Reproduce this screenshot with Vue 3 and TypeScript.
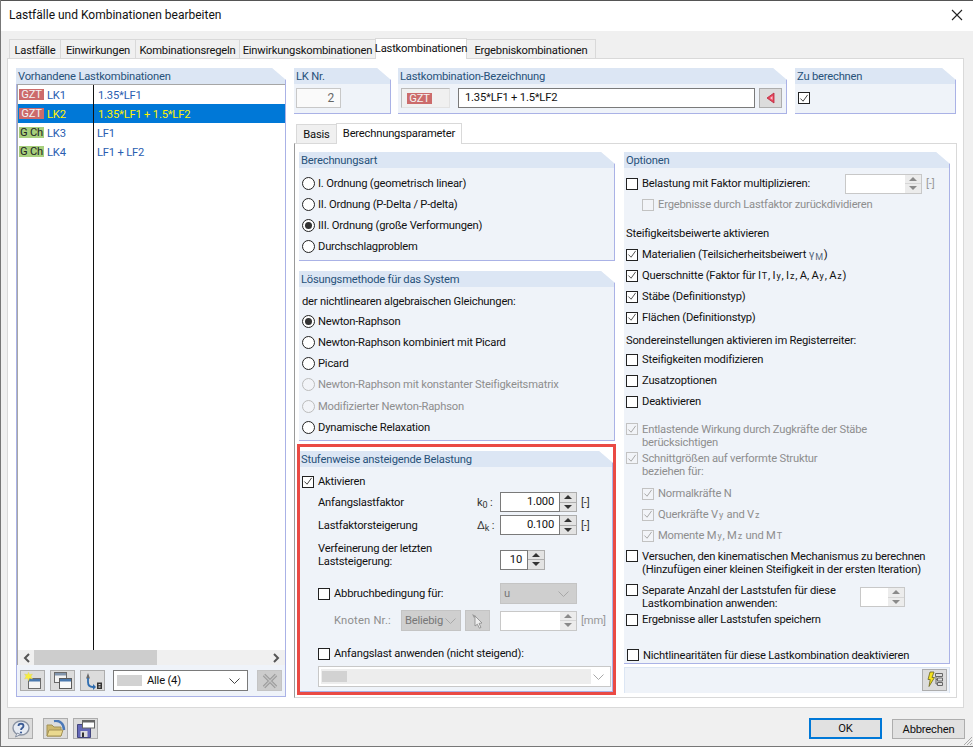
<script setup lang="ts">
import { ref } from 'vue'

interface Combo {
  badge: string
  kind: 'gzt' | 'gch'
  no: string
  formula: string
}

interface Choice {
  text: string
  on?: boolean
  off?: boolean
}

const mainTabs = ['Lastfälle', 'Einwirkungen', 'Kombinationsregeln', 'Einwirkungskombinationen', 'Lastkombinationen', 'Ergebniskombinationen']

const combos = ref<Combo[]>([
  { badge: 'GZT', kind: 'gzt', no: 'LK1', formula: '1.35*LF1' },
  { badge: 'GZT', kind: 'gzt', no: 'LK2', formula: '1.35*LF1 + 1.5*LF2' },
  { badge: 'G Ch', kind: 'gch', no: 'LK3', formula: 'LF1' },
  { badge: 'G Ch', kind: 'gch', no: 'LK4', formula: 'LF1 + LF2' },
])

const selected = ref(1)

const orders: Choice[] = [
  { text: 'I. Ordnung (geometrisch linear)' },
  { text: 'II. Ordnung (P-Delta / P-delta)' },
  { text: 'III. Ordnung (große Verformungen)', on: true },
  { text: 'Durchschlagproblem' },
]

const methods: Choice[] = [
  { text: 'Newton-Raphson', on: true },
  { text: 'Newton-Raphson kombiniert mit Picard' },
  { text: 'Picard' },
  { text: 'Newton-Raphson mit konstanter Steifigkeitsmatrix', off: true },
  { text: 'Modifizierter Newton-Raphson', off: true },
  { text: 'Dynamische Relaxation' },
]

const special = ['Steifigkeiten modifizieren', 'Zusatzoptionen', 'Deaktivieren']
</script>

<template>
  <div class="dialog">
    <header class="titlebar">
      <span class="title">Lastfälle und Kombinationen bearbeiten</span>
      <svg class="close" width="12" height="12" viewBox="0 0 12 12"><path d="M1 1l10 10M11 1L1 11" stroke="#222" stroke-width="1.1" fill="none" /></svg>
    </header>

    <nav class="main-tabs">
      <span v-for="(t, i) in mainTabs" :key="t" class="tab" :class="['mt' + i, { active: i === 4 }]">{{ t }}</span>
    </nav>

    <div class="outer">
      <section class="panel list-panel">
        <h3 class="head">Vorhandene Lastkombinationen</h3>
        <div class="list">
          <div class="sep"></div>
          <div v-for="(c, i) in combos" :key="c.no" class="row" :class="{ sel: i === selected }">
            <span class="badge" :class="c.kind">{{ c.badge }}</span>
            <span class="no">{{ c.no }}</span>
            <span class="formula" :class="{ tight: c.kind === 'gch' }">{{ c.formula }}</span>
          </div>
        </div>
        <div class="hscroll">
          <svg width="8" height="10" viewBox="0 0 8 10"><path d="M6 1L2 5l4 4" stroke="#555" stroke-width="2" fill="none" /></svg>
          <div class="thumb"></div>
          <svg class="right-arrow" width="8" height="10" viewBox="0 0 8 10"><path d="M2 1l4 4-4 4" stroke="#555" stroke-width="2" fill="none" /></svg>
        </div>
        <div class="list-foot">
          <button class="ico">
            <svg width="18" height="18" viewBox="0 0 18 18">
              <rect x="4.500" y="6.500" width="12" height="10" fill="#f3f3f3" stroke="#6a6a6a" />
              <rect x="5" y="7" width="11" height="2.500" fill="#4a78ad" />
              <path d="M4.500 0l1 2.600L8.500 2 7 4.300 8.500 7 5.500 6.300 4.500 9 3.500 6.300.500 7 2 4.300.500 2l3 .6z" fill="#f8ee3c" stroke="#d8cf70" stroke-width=".4" />
            </svg>
          </button>
          <button class="ico">
            <svg width="18" height="18" viewBox="0 0 18 18">
              <rect x=".5" y=".5" width="12" height="10" fill="#f3f3f3" stroke="#6a6a6a" />
              <rect x="1" y="1" width="11" height="2.500" fill="#8195ad" />
              <rect x="5.500" y="6.500" width="12" height="10" fill="#f8f8f8" stroke="#5a5a5a" />
              <rect x="6" y="7" width="11" height="2.500" fill="#4a78ad" />
            </svg>
          </button>
          <button class="ico">
            <svg width="20" height="18" viewBox="0 0 20 18">
              <path d="M5 1l2 5.500H3z" fill="#6a6a6a" />
              <path d="M5 6v4c0 3 2 5 5 5h1" stroke="#2f6db0" stroke-width="1.800" fill="none" />
              <path d="M10 12l3 3-3 3z" fill="#2f6db0" />
              <rect x="14" y="10.500" width="5" height="6.500" fill="#333" />
              <rect x="15.500" y="12" width="2" height="1.200" fill="#ddd" />
              <rect x="15.500" y="14.400" width="2" height="1.200" fill="#ddd" />
            </svg>
          </button>
          <div class="select filter">
            <span class="swatch"></span>
            <span class="sel-text">Alle (4)</span>
            <svg class="chev" width="11" height="6" viewBox="0 0 11 6"><path d="M.5.5l5 5 5-5" stroke="#444" fill="none" /></svg>
          </div>
          <button class="ico ico-off">
            <svg width="18" height="18" viewBox="0 0 18 18"><path d="M3 3l12 12M15 3L3 15" stroke="#9c9c9c" stroke-width="3.400" fill="none" /><path d="M3 3l12 12M15 3L3 15" stroke="#c4c4c4" stroke-width="1.200" fill="none" /></svg>
          </button>
        </div>
      </section>

      <div class="right">
        <div class="top-row">
          <section class="panel nr-panel">
            <h3 class="head">LK Nr.</h3>
            <div class="nr-body"><span class="nr-box">2</span></div>
          </section>
          <section class="panel name-panel">
            <h3 class="head">Lastkombination-Bezeichnung</h3>
            <div class="name-body">
              <span class="gzt-box"><span class="badge gzt">GZT</span></span>
              <span class="name-input">1.35*LF1 + 1.5*LF2</span>
              <button class="tri-btn">
                <svg width="9" height="12" viewBox="0 0 9 12"><path d="M8 1v10L1 6z" fill="#e8475d" stroke="#b8263b" stroke-width=".8" /><path d="M6.500 4v4L4 6z" fill="#f9c2cb" /></svg>
              </button>
            </div>
          </section>
          <section class="panel calc-panel">
            <h3 class="head">Zu berechnen</h3>
            <div class="calc-body">
              <span class="cb"><svg width="11" height="11" viewBox="0 0 11 11"><path d="M1.500 5.500l3 3 5-7" stroke="#444" stroke-width="1.100" fill="none" /></svg></span>
            </div>
          </section>
        </div>

        <nav class="sub-tabs">
          <span class="tab basis">Basis</span>
          <span class="tab active params">Berechnungsparameter</span>
        </nav>

        <div class="inner">
          <div class="col-left">
            <section class="panel p-order">
              <h3 class="head">Berechnungsart</h3>
              <div class="pad">
                <label v-for="o in orders" :key="o.text" class="line">
                  <span class="radio" :class="{ on: o.on }"></span>{{ o.text }}
                </label>
              </div>
            </section>

            <section class="panel p-method">
              <h3 class="head">Lösungsmethode für das System</h3>
              <div class="pad">
                <div class="line plain intro">der nichtlinearen algebraischen Gleichungen:</div>
                <label v-for="m in methods" :key="m.text" class="line" :class="{ dim: m.off }">
                  <span class="radio" :class="{ on: m.on, off: m.off }"></span>{{ m.text }}
                </label>
              </div>
            </section>

            <div class="steps-wrap">
              <section class="panel p-steps">
                <h3 class="head">Stufenweise ansteigende Belastung</h3>
                <div class="pad">
                  <label class="line">
                    <span class="cb"><svg width="11" height="11" viewBox="0 0 11 11"><path d="M1.500 5.500l3 3 5-7" stroke="#444" stroke-width="1.100" fill="none" /></svg></span>Aktivieren
                  </label>
                  <div class="field f1">
                    <span class="f-label">Anfangslastfaktor</span>
                    <span class="f-sym">k<sub>0</sub> :</span>
                    <span class="spin"><span class="val">1.000</span><span class="arrows"><i class="up"></i><i class="down"></i></span></span>
                    <span class="unit">[-]</span>
                  </div>
                  <div class="field f2">
                    <span class="f-label">Lastfaktorsteigerung</span>
                    <span class="f-sym">Δ<sub>k</sub> :</span>
                    <span class="spin"><span class="val">0.100</span><span class="arrows"><i class="up"></i><i class="down"></i></span></span>
                    <span class="unit">[-]</span>
                  </div>
                  <div class="field f3">
                    <span class="f-label two">Verfeinerung der letzten<br />Laststeigerung:</span>
                    <span class="spin small"><span class="val">10</span><span class="arrows"><i class="up"></i><i class="down"></i></span></span>
                  </div>
                  <div class="field f4">
                    <label class="line sub"><span class="cb"></span>Abbruchbedingung für:</label>
                    <div class="select gray-sel u-sel"><span class="sel-text">u</span><svg class="chev" width="11" height="6" viewBox="0 0 11 6"><path d="M.5.5l5 5 5-5" stroke="#a8a8a8" fill="none" /></svg></div>
                  </div>
                  <div class="field f5">
                    <span class="knoten">Knoten Nr.:</span>
                    <div class="select gray-sel any-sel"><span class="sel-text">Beliebig</span><svg class="chev" width="11" height="6" viewBox="0 0 11 6"><path d="M.5.5l5 5 5-5" stroke="#a8a8a8" fill="none" /></svg></div>
                    <button class="pick">
                      <svg width="14" height="16" viewBox="0 0 14 16"><path d="M4 3l7 7-3 .4 2 4-1.600.8-2-4L4 13z" fill="#eee" stroke="#888" stroke-width=".8" /><path d="M1 1l4 2-2 2z" fill="#999" /></svg>
                    </button>
                    <span class="spin empty"><span class="val"></span><span class="arrows"><i class="up"></i><i class="down"></i></span></span>
                    <span class="unit dim">[mm]</span>
                  </div>
                  <label class="line sub f6"><span class="cb"></span>Anfangslast anwenden (nicht steigend):</label>
                  <div class="wide-sel">
                    <div class="wide-fill"><span class="swatch"></span></div>
                    <svg class="chev" width="11" height="6" viewBox="0 0 11 6"><path d="M.5.5l5 5 5-5" stroke="#a8a8a8" fill="none" /></svg>
                  </div>
                </div>
              </section>
              <div class="red-frame"></div>
            </div>
          </div>

          <div class="col-right">
            <section class="panel p-options">
              <h3 class="head">Optionen</h3>
              <div class="opt-body">
                <div class="line o-first">
                  <span class="cb"></span><span class="o-first-text">Belastung mit Faktor multiplizieren:</span>
                  <span class="spin empty factor"><span class="val"></span><span class="arrows"><i class="up"></i><i class="down"></i></span></span>
                  <span class="unit dim">[-]</span>
                </div>
                <label class="line dim ind"><span class="cb off"></span>Ergebnisse durch Lastfaktor zurückdividieren</label>
                <div class="line plain o-gap">Steifigkeitsbeiwerte aktivieren</div>
                <label class="line"><span class="cb"><svg width="11" height="11" viewBox="0 0 11 11"><path d="M1.500 5.500l3 3 5-7" stroke="#555" stroke-width="1.100" fill="none" /></svg></span>Materialien (Teilsicherheitsbeiwert&nbsp;<span class="greek">γ<sub>M</sub></span>)</label>
                <label class="line"><span class="cb"><svg width="11" height="11" viewBox="0 0 11 11"><path d="M1.500 5.500l3 3 5-7" stroke="#555" stroke-width="1.100" fill="none" /></svg></span>Querschnitte (Faktor für I<sub>T</sub>, I<sub>y</sub>, I<sub>z</sub>, A, A<sub>y</sub>, A<sub>z</sub>)</label>
                <label class="line"><span class="cb"><svg width="11" height="11" viewBox="0 0 11 11"><path d="M1.500 5.500l3 3 5-7" stroke="#555" stroke-width="1.100" fill="none" /></svg></span>Stäbe (Definitionstyp)</label>
                <label class="line"><span class="cb"><svg width="11" height="11" viewBox="0 0 11 11"><path d="M1.500 5.500l3 3 5-7" stroke="#555" stroke-width="1.100" fill="none" /></svg></span>Flächen (Definitionstyp)</label>
                <div class="line plain o-sonder">Sondereinstellungen aktivieren im Registerreiter:</div>
                <label v-for="s in special" :key="s" class="line"><span class="cb"></span>{{ s }}</label>
                <label class="multi dim o-ent"><span class="cb off"><svg width="11" height="11" viewBox="0 0 11 11"><path d="M1.500 5.500l3 3 5-7" stroke="#aaa" stroke-width="1.100" fill="none" /></svg></span><span>Entlastende Wirkung durch Zugkräfte der Stäbe<br />berücksichtigen</span></label>
                <label class="multi dim o-sch"><span class="cb off"><svg width="11" height="11" viewBox="0 0 11 11"><path d="M1.500 5.500l3 3 5-7" stroke="#aaa" stroke-width="1.100" fill="none" /></svg></span><span>Schnittgrößen auf verformte Struktur<br />beziehen für:</span></label>
                <label class="line dim ind o-nk"><span class="cb off"><svg width="11" height="11" viewBox="0 0 11 11"><path d="M1.500 5.500l3 3 5-7" stroke="#aaa" stroke-width="1.100" fill="none" /></svg></span>Normalkräfte N</label>
                <label class="line dim ind"><span class="cb off"><svg width="11" height="11" viewBox="0 0 11 11"><path d="M1.500 5.500l3 3 5-7" stroke="#aaa" stroke-width="1.100" fill="none" /></svg></span>Querkräfte V<sub>y</sub>&nbsp;and V<sub>z</sub></label>
                <label class="line dim ind"><span class="cb off"><svg width="11" height="11" viewBox="0 0 11 11"><path d="M1.500 5.500l3 3 5-7" stroke="#aaa" stroke-width="1.100" fill="none" /></svg></span>Momente M<sub>y</sub>, M<sub>z</sub>&nbsp;und M<sub>T</sub></label>
                <label class="multi o-ver"><span class="cb"></span><span>Versuchen, den kinematischen Mechanismus zu berechnen<br />(Hinzufügen einer kleinen Steifigkeit in der ersten Iteration)</span></label>
                <div class="multi o-sep">
                  <span class="cb"></span><span class="sep-text">Separate Anzahl der Laststufen für diese<br />Lastkombination anwenden:</span>
                  <span class="spin empty count"><span class="val"></span><span class="arrows"><i class="up"></i><i class="down"></i></span></span>
                </div>
                <label class="line"><span class="cb"></span>Ergebnisse aller Laststufen speichern</label>
                <label class="line o-nicht"><span class="cb"></span>Nichtlinearitäten für diese Lastkombination deaktivieren</label>
              </div>
            </section>
            <div class="opt-foot">
              <button class="ico bolt">
                <svg width="20" height="18" viewBox="0 0 20 18">
                  <path d="M5 1h4L7 6.500h2.500L4 15.500l1.200-7H3z" fill="#f4e21c" stroke="#6b6420" stroke-width=".8" />
                  <path d="M10.500 2.500h7v3h-7zM12.500 7h5v3h-5zM12.500 11.500h5v3h-5zM11 5.500v7.500h1.500M11 8.500h1.500" fill="none" stroke="#666" stroke-width="1" />
                </svg>
              </button>
            </div>
          </div>
        </div>
      </div>
    </div>

    <footer class="bottom">
      <button class="ico dlg">
        <svg width="20" height="18" viewBox="0 0 20 18">
          <ellipse cx="10" cy="8" rx="8" ry="7" fill="#e6ebf3" stroke="#8a93a3" stroke-width="1.400" />
          <path d="M6 13l-1.500 4 5-2.500z" fill="#e6ebf3" stroke="#8a93a3" />
          <path d="M7.500 6c0-3 5-3 5 0 0 2-2.500 2-2.500 4" stroke="#3b5c96" stroke-width="1.800" fill="none" />
          <circle cx="10" cy="12.500" r="1.100" fill="#3b5c96" />
        </svg>
      </button>
      <button class="ico dlg open">
        <svg width="20" height="18" viewBox="0 0 20 18">
          <path d="M8 1c6-1 10 3 10 9" stroke="#4a78b8" stroke-width="2.400" fill="none" />
          <path d="M1 5h5l2 2h7v9H1z" fill="#cdb86e" stroke="#a39256" />
          <path d="M1 16l2-6h14l-2 6z" fill="#ead98f" stroke="#a39256" />
        </svg>
      </button>
      <button class="ico dlg">
        <svg width="20" height="18" viewBox="0 0 20 18">
          <path d="M1.500 4.500h13v13h-13z" fill="#6468b8" stroke="#43467e" />
          <rect x="4.500" y="11" width="7" height="6" fill="#ddd" />
          <rect x="6" y="12.500" width="2" height="4.500" fill="#333" />
          <rect x="6.500" y=".5" width="12" height="7.500" fill="#fff" stroke="#666" />
          <rect x="6.500" y=".5" width="12" height="2" fill="#666" />
        </svg>
      </button>
      <div class="spacer"></div>
      <button class="btn ok">OK</button>
      <button class="btn">Abbrechen</button>
      <svg class="grip" width="11" height="11" viewBox="0 0 11 11"><path d="M10 2L2 10M10 5L5 10M10 8L8 10" stroke="#aaa" fill="none" /></svg>
    </footer>
  </div>
</template>

<style scoped>
.dialog {
  width: 973px;
  height: 747px;
  box-sizing: border-box;
  border-left: 1px solid #777;
  border-bottom: 1px solid #777;
  background: #f0f0f0;
  font-family: Roboto, "Liberation Sans", sans-serif;
  font-size: 11.2px;
  letter-spacing: -0.2px;
  color: #111;
  overflow: hidden;
  display: flex;
  flex-direction: column;
}

.titlebar {
  height: 31px;
  flex: none;
  background: #fff;
  display: flex;
  align-items: center;
  padding: 0 10px 2px 8px;
  border-top: 1px solid #555;
  box-sizing: border-box;
}

.title {
  font-size: 12px;
  letter-spacing: 0;
  color: #111;
  flex: 1;
}

.main-tabs {
  height: 21px;
  margin-top: 6px;
  padding-left: 8px;
  display: flex;
  align-items: flex-end;
  flex: none;
}

.tab {
  display: flex;
  align-items: center;
  justify-content: center;
  height: 19px;
  box-sizing: border-box;
  background: #f0f0f0;
  border: 1px solid #d9d9d9;
  border-bottom: none;
  margin-right: -1px;
  padding-top: 2px;
}

.tab.active {
  height: 21px;
  background: #fff;
  position: relative;
  z-index: 1;
  margin-bottom: -1px;
  padding: 0 0 2px;
}

.mt0 { width: 52px; }
.mt1 { width: 76px; }
.mt2 { width: 105px; }
.mt3 { width: 137px; }
.mt4 { width: 92px; }
.mt5 { width: 130px; }

.outer {
  height: 650px;
  flex: none;
  margin: 0 9px 0 6px;
  background: #fff;
  border: 1px solid #d9d9d9;
  box-sizing: border-box;
  padding: 9px 6px 0 8px;
  display: flex;
  gap: 8px;
}

.panel {
  background: #eff3f9;
  border-right: 1px solid #aab2e6;
  border-bottom: 1px solid #aab2e6;
  box-sizing: border-box;
  clip-path: polygon(0 0, calc(100% - 14px) 0, 100% 12px, 100% 100%, 0 100%);
}

.head {
  margin: 0;
  height: 16px;
  line-height: 18px;
  background: #dce6f4;
  font-size: 11.2px;
  font-weight: 400;
  color: #28527a;
  padding-left: 2px;
  white-space: nowrap;
  overflow: hidden;
}

.list-panel {
  width: 270px;
  height: 629px;
  display: flex;
  flex-direction: column;
  border-left: 1px solid #aab2e6;
}

.list-panel .head {
  margin-left: -1px;
  flex: none;
}

.list {
  height: 566px;
  flex: none;
  background: #fff;
  border-top: 1px solid #a6a6a6;
  border-left: 1px solid #a6a6a6;
  box-sizing: border-box;
  position: relative;
}

.sep {
  position: absolute;
  left: 75px;
  top: 0;
  bottom: 0;
  width: 1px;
  background: #111;
  z-index: 2;
}

.row {
  height: 19px;
  display: flex;
  align-items: center;
  color: #2a5db0;
  white-space: nowrap;
}

.row.sel {
  background: #0078d7;
  color: #fff200;
}

.badge {
  height: 11px;
  width: 25px;
  flex: none;
  margin-left: 1px;
  display: flex;
  align-items: center;
  justify-content: center;
  color: #f4f4f4;
}

.badge.gzt {
  background: #cc6b6b;
}

.badge.gch {
  background: #a7cf7c;
  color: #222;
}

.no {
  width: 49px;
  flex: none;
  padding: 2px 0 0 3px;
  box-sizing: border-box;
}

.formula {
  margin-left: 5px;
  padding-top: 2px;
}

.formula.tight {
  margin-left: 4px;
}

.hscroll {
  height: 15px;
  flex: none;
  background: #f0f0f0;
  display: flex;
  align-items: center;
  padding-left: 5px;
  border-left: 1px solid #a6a6a6;
  box-sizing: border-box;
}

.thumb {
  width: 123px;
  height: 15px;
  background: #cdcdcd;
  margin-left: 3px;
}

.right-arrow {
  margin-left: auto;
  margin-right: 5px;
}

.list-foot {
  flex: 1;
  display: flex;
  align-items: center;
  padding-left: 3px;
  background: #eff3f9;
}

.ico {
  width: 25px;
  height: 21px;
  box-sizing: border-box;
  background: #dcdcdc;
  border: 1px solid #adadad;
  padding: 0;
  margin: 0 5px 0 0;
  display: flex;
  align-items: center;
  justify-content: center;
  flex: none;
}

.ico-off {
  background: #ccc;
  border-color: #c4c4c4;
  margin: 0 0 0 9px;
}

.select {
  display: flex;
  align-items: center;
  box-sizing: border-box;
  background: #fff;
  border: 1px solid #7a7a7a;
}

.filter {
  width: 135px;
  height: 21px;
  margin-left: 3px;
  padding-left: 3px;
}

.swatch {
  width: 25px;
  height: 11px;
  background: #d2d2d2;
  flex: none;
}

.filter .sel-text {
  margin-left: 5px;
}

.chev {
  margin-left: auto;
  margin-right: 7px;
  flex: none;
}

.right {
  width: 663px;
  display: flex;
  flex-direction: column;
}

.top-row {
  display: flex;
  height: 46px;
  flex: none;
}

.nr-panel {
  width: 97px;
  margin-right: 7px;
}

.nr-body {
  padding: 4px 0 0 2px;
}

.nr-box {
  display: block;
  width: 45px;
  height: 20px;
  line-height: 19px;
  box-sizing: border-box;
  background: #fafafa;
  border: 1px solid #c8c8c8;
  text-align: right;
  padding-right: 6px;
  color: #666;
  font-size: 12px;
}

.name-panel {
  width: 389px;
  margin-right: 8px;
}

.name-body {
  display: flex;
  align-items: center;
  padding: 4px 4px 0 3px;
}

.gzt-box {
  width: 49px;
  height: 20px;
  box-sizing: border-box;
  border: 1px solid #e2e2e2;
  border-top-color: #bbb;
  border-left-color: #bbb;
  background: #f0f0f0;
  display: flex;
  align-items: center;
  padding-left: 5px;
  flex: none;
}

.gzt-box .badge {
  margin: 0;
}

.name-input {
  width: 297px;
  height: 20px;
  line-height: 18px;
  margin-left: 8px;
  box-sizing: border-box;
  background: #fff;
  border: 1px solid #7a7a7a;
  padding-left: 6px;
  color: #111;
  flex: none;
}

.tri-btn {
  width: 25px;
  height: 20px;
  margin-left: 4px;
  box-sizing: border-box;
  background: #dcdcdc;
  border: 1px solid #adadad;
  padding: 0;
  display: flex;
  align-items: center;
  justify-content: center;
}

.calc-panel {
  width: 161px;
}

.calc-body {
  padding: 8px 0 0 3px;
}

.sub-tabs {
  height: 21px;
  margin-top: 8px;
  padding-left: 2px;
  display: flex;
  align-items: flex-end;
  flex: none;
}

.basis {
  width: 41px;
  padding-top: 0;
}

.params {
  width: 126px;
}

.inner {
  height: 555px;
  flex: none;
  border: 1px solid #d9d9d9;
  border-left-color: #9a9a9a;
  box-sizing: border-box;
  padding: 8px 6px 0 4px;
  display: flex;
  gap: 9px;
}

.col-left {
  width: 316px;
  flex: none;
  display: flex;
  flex-direction: column;
  gap: 10px;
}

.p-order {
  height: 109px;
}

.p-order .pad {
  padding-top: 5px;
}

.p-method {
  height: 170px;
}

.p-method .dim + .dim {
  margin-top: 1px;
}

.steps-wrap {
  position: relative;
  height: 241px;
}

.p-steps {
  height: 241px;
  width: 314px;
}

.red-frame {
  position: absolute;
  left: -2px;
  top: -7px;
  width: 319px;
  height: 251px;
  box-sizing: border-box;
  border: 3px solid #ea4a44;
  pointer-events: none;
}

.pad {
  padding: 4px 0 0 3px;
}

.line {
  height: 21px;
  display: flex;
  align-items: center;
  white-space: nowrap;
}

.line.intro {
  height: 20px;
  padding-top: 1px;
  box-sizing: border-box;
}

.dim {
  color: #8e8e8e;
}

.radio {
  width: 13px;
  height: 13px;
  box-sizing: border-box;
  border: 1px solid #222;
  border-radius: 50%;
  background: #fff;
  margin-right: 3px;
  flex: none;
  display: flex;
  align-items: center;
  justify-content: center;
}

.radio.on::after {
  content: "";
  width: 7px;
  height: 7px;
  border-radius: 50%;
  background: #333;
}

.radio.off {
  border-color: #bcbcbc;
  background: #f2f4f8;
}

.cb {
  width: 12px;
  height: 12px;
  box-sizing: border-box;
  border: 1px solid #222;
  background: #fff;
  margin-right: 4px;
  flex: none;
  display: flex;
  align-items: center;
  justify-content: center;
}

.cb.off {
  border-color: #c2c2c2;
  background: #f2f4f8;
}

sub {
  font-size: 9px;
  line-height: 0;
  vertical-align: -2px;
}

.line sub {
  margin: 0 1px;
}

.greek {
  color: #5a6a80;
}

.field {
  display: flex;
  align-items: center;
  white-space: nowrap;
}

.f1 {
  height: 20px;
  padding-left: 16px;
}

.f2 {
  height: 20px;
  margin-top: 3px;
  padding-left: 16px;
}

.f3 {
  height: 26px;
  margin-top: 7px;
  padding-left: 16px;
}

.f3 .spin {
  margin-top: 9px;
}

.f4 {
  height: 21px;
  margin-top: 15px;
  padding-left: 16px;
}

.f5 {
  height: 21px;
  margin-top: 6px;
  padding-left: 32px;
}

.f-label {
  width: 159px;
  flex: none;
}

.f-label.two {
  width: 182px;
  line-height: 13px;
}

.f-sym {
  width: 23px;
  flex: none;
  color: #333;
}

.spin {
  width: 77px;
  height: 20px;
  flex: none;
  box-sizing: border-box;
  display: flex;
}

.spin .val {
  flex: 1;
  text-align: right;
  line-height: 18px;
  padding-right: 5px;
  background: #fff;
  border: 1px solid #7a7a7a;
}

.arrows {
  width: 17px;
  flex: none;
  display: flex;
  flex-direction: column;
  box-sizing: border-box;
  background: #e3e3e3;
  border: 1px solid #adadad;
  border-left: none;
}

.arrows i {
  flex: 1;
  display: flex;
  align-items: center;
  justify-content: center;
}

.arrows i + i {
  border-top: 1px solid #adadad;
}

.arrows i::after {
  content: "";
  border-left: 4px solid transparent;
  border-right: 4px solid transparent;
}

.arrows .up::after {
  border-bottom: 4px solid #333;
}

.arrows .down::after {
  border-top: 4px solid #333;
}

.spin.small {
  width: 45px;
}

.spin.empty .val {
  border-color: #c8c8c8;
  border-right: none;
}

.spin.empty .arrows {
  border-color: #c8c8c8;
  background: #ececec;
}

.spin.empty .arrows i + i {
  border-top-color: #d6d6d6;
}

.spin.empty .arrows i::after {
  border-top-color: #8a8a8a;
  border-bottom-color: #8a8a8a;
}

.unit {
  margin-left: 4px;
  color: #333;
}

.unit.dim {
  color: #999;
}

.line.sub {
  height: 21px;
  flex: none;
}

.f4 .line.sub {
  width: 182px;
}

.f6 {
  margin: 12px 0 0 16px;
}

.gray-sel {
  background: #cfcfcf;
  border-color: #c4c4c4;
  color: #777;
  padding-left: 3px;
}

.u-sel {
  width: 77px;
  height: 21px;
}

.any-sel {
  width: 60px;
  height: 21px;
  flex: none;
}

.any-sel .chev {
  margin-right: 4px;
}

.knoten {
  width: 67px;
  flex: none;
  color: #8e8e8e;
  letter-spacing: .2px;
}

.pick {
  width: 25px;
  height: 21px;
  margin: 0 10px 0 4px;
  box-sizing: border-box;
  background: #cfcfcf;
  border: 1px solid #c4c4c4;
  padding: 0;
  display: flex;
  align-items: center;
  justify-content: center;
  flex: none;
}

.wide-sel {
  width: 293px;
  height: 21px;
  margin: 2px 0 0 16px;
  box-sizing: border-box;
  background: #fff;
  border: 1px solid #c8c8c8;
  padding: 2px;
  display: flex;
  align-items: center;
}

.wide-fill {
  width: 270px;
  height: 15px;
  background: #ededed;
  display: flex;
  align-items: center;
  padding-left: 1px;
  box-sizing: border-box;
}

.wide-sel .chev {
  margin-right: 4px;
}

.col-right {
  width: 327px;
  flex: none;
}

.p-options {
  height: 512px;
  width: 326px;
}

.opt-body {
  padding: 5px 0 0 2px;
}

.o-first-text {
  width: 203px;
  flex: none;
}

.factor {
  width: 77px;
  height: 20px;
}

.ind {
  padding-left: 16px;
}

.o-gap {
  margin-top: 8px;
}

.line.o-sonder {
  margin-top: 3px;
  height: 18px;
}

.multi {
  display: flex;
  align-items: flex-start;
  line-height: 13px;
  white-space: nowrap;
}

.o-ent {
  margin-top: 11px;
}

.o-sch {
  margin-top: 3px;
}

.line.o-nk {
  margin-top: 5px;
}

.o-ver {
  margin-top: 4px;
}

.o-sep {
  margin-top: 8px;
  height: 25px;
}

.sep-text {
  width: 218px;
  flex: none;
}

.count {
  width: 45px;
  height: 20px;
  margin-top: 3px;
}

.line.o-nicht {
  margin-top: 16px;
  height: 18px;
  padding-left: 1px;
}

.opt-foot {
  width: 326px;
  height: 26px;
  margin-top: 3px;
  box-sizing: border-box;
  background: #eff3f9;
  border: 1px solid #dce6f4;
  border-bottom: none;
  display: flex;
  justify-content: flex-end;
  padding: 1px 2px 0 0;
}

.bolt {
  margin: 0;
  height: 22px;
}

.bottom {
  flex: 1;
  display: flex;
  align-items: flex-start;
  padding: 10px 8px 0 7px;
  position: relative;
}

.dlg {
  height: 21px;
  margin-right: 0;
}

.dlg + .dlg {
  margin-left: 5px;
}

.dlg.open {
  margin-left: 10px;
}

.spacer {
  flex: 1;
}

.btn {
  width: 73px;
  height: 20px;
  box-sizing: border-box;
  background: #e1e1e1;
  border: 1px solid #adadad;
  padding: 0;
  font: inherit;
  letter-spacing: inherit;
  color: #111;
  margin-left: 10px;
  margin-top: 1px;
}

.btn.ok {
  border: 2px solid #0078d7;
  height: 21px;
  margin-top: 0;
}

.grip {
  position: absolute;
  right: 0;
  bottom: 0;
}
</style>
